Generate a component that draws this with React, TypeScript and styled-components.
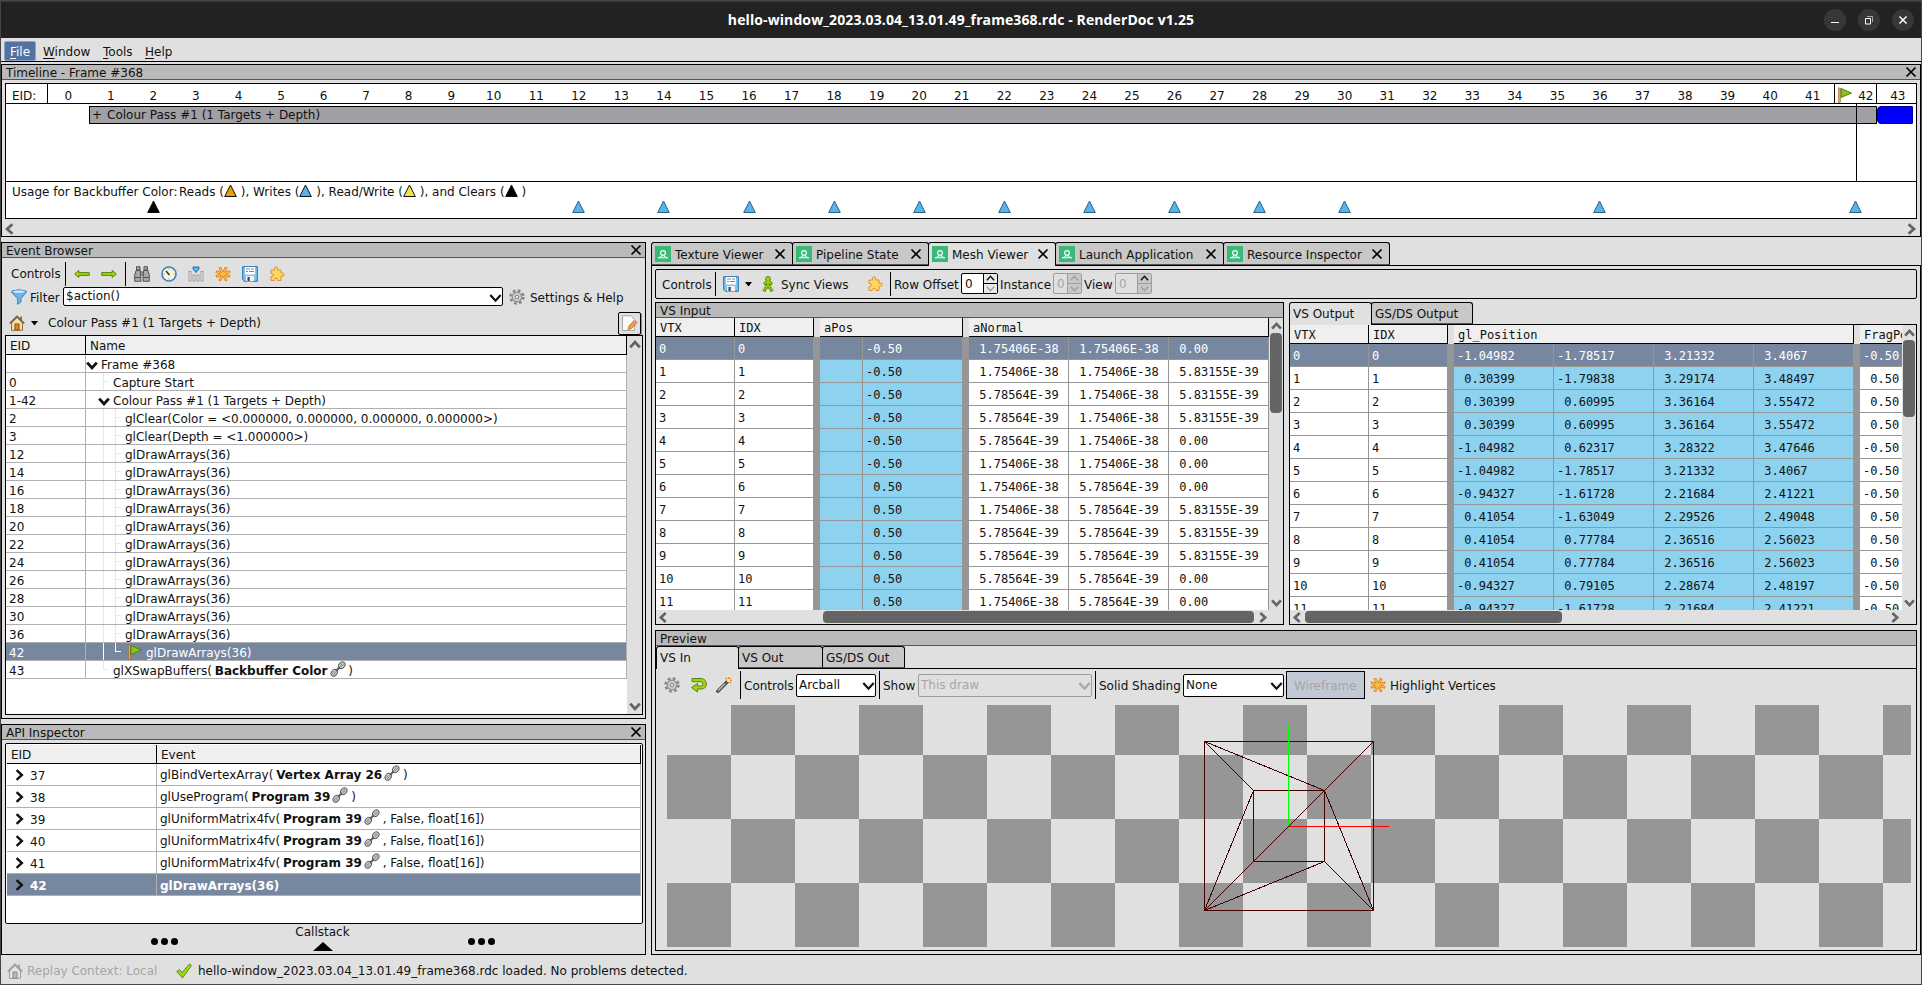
import React from "react";
import styled, { createGlobalStyle, css } from "styled-components";

const BG = "#e0e0e0";
const SELECTED = "#7887a0";
const SKY = "#8dd2ef";

const Global = createGlobalStyle`
  * { box-sizing: border-box; }
  body { margin: 0; background: ${BG}; overflow: hidden; }
`;

const Window = styled.div`
  width: 1922px;
  height: 985px;
  display: flex;
  flex-direction: column;
  background: ${BG};
  border: 1px solid #454545;
  font: 12px/14px "DejaVu Sans", sans-serif;
  color: #111;
  white-space: pre;
  overflow: hidden;
`;

const TitleBar = styled.header`
  flex: none;
  height: 37px;
  background: #222;
  border-top: 1px solid #3a3a3a;
  color: #fff;
  display: flex;
  align-items: center;
`;
const TitleText = styled.div`
  flex: 1;
  padding-left: 167px;
  text-align: center;
  font: bold 14px/20px "Open Sans", "Noto Sans", sans-serif;
  letter-spacing: 0.1px;
`;
const WindowButtons = styled.div`
  display: flex;
  gap: 12px;
  padding-right: 7px;
  width: 167px;
  justify-content: flex-end;
`;
const RoundButton = styled.div`
  width: 22px;
  height: 22px;
  border-radius: 50%;
  background: #373737;
  svg { display: block; }
`;

const MenuBar = styled.nav`
  flex: none;
  height: 24px;
  padding: 3px 0 0 3px;
  border-bottom: 1px solid #000;
  display: flex;
`;
const MenuItem = styled.span<{ $active?: boolean; $w: number }>`
  width: ${(p) => p.$w}px;
  height: 20px;
  padding: 4px 0 0 6px;
  border-radius: 2px;
  ${(p) => p.$active && css`background: #5371a3; color: #fff; border: 1px solid #8ba2c9; padding: 3px 0 0 5px;`}
  u { text-underline-offset: 2px; }
`;

const Dock = styled.section<{ $h: number }>`
  flex: none;
  height: ${(p) => p.$h}px;
  border: 1px solid #000;
  display: flex;
  flex-direction: column;
  overflow: hidden;
`;
const DockTitle = styled.div`
  flex: none;
  height: 15px;
  background: #bababa;
  border-bottom: 1px solid #555;
  padding: 0 3px 0 4px;
  display: flex;
  justify-content: space-between;
  line-height: 16px;
  svg { margin-top: 1px; }
`;

/* ---- timeline ---- */
const TimelineBox = styled.div`
  margin: 3px 3px 0;
  height: 136px;
  border: 1px solid #000;
  background: #fff;
  position: relative;
  overflow: hidden;
`;
const EidRow = styled.div`
  height: 20px;
  border-bottom: 1px solid #000;
  display: flex;
`;
const EidLabel = styled.div`
  flex: none;
  width: 42px;
  margin-right: -1px;
  border-right: 1px solid #000;
  padding: 5px 0 0 6px;
`;
const EidCell = styled.div<{ $current?: boolean }>`
  flex: none;
  width: 42.56px;
  padding-top: 5px;
  text-align: center;
  ${(p) => p.$current && css`
    border: solid #000; border-width: 0 1px;
    display: flex; justify-content: space-between;
    padding: 3px 2px 0 2px;
    span { padding-top: 2px; }
  `}
`;
const PassArea = styled.div`
  height: 78px;
  padding: 2px 0 0 83px;
  border-bottom: 1px solid #000;
  display: flex;
`;
const PassBar = styled.div`
  width: 1788px;
  height: 18px;
  background: #a09fa4;
  border: 1px solid #000;
  padding: 1px 0 0 2px;
  span { margin-left: 5px; }
`;
const SwapBar = styled.div`
  width: 36px;
  height: 18px;
  background: #00f;
  border: 1px solid #0000a8;
  border-radius: 4px 1px 1px 4px;
`;
const CurrentLine = styled.div`
  position: absolute;
  left: 1850px;
  top: 20px;
  width: 1px;
  height: 78px;
  background: #000;
`;
const UsageLine = styled.div`
  height: 18px;
  padding: 3px 0 0 6px;
  display: flex;
  svg { margin-top: -1px; }
`;
const UsageMarks = styled.div`
  display: flex;
  padding-left: 41px;
`;
const UsageCell = styled.div`
  flex: none;
  width: 42.56px;
  height: 14px;
  display: flex;
  justify-content: center;
`;
const ScrollStrip = styled.div`
  height: 17px;
  padding: 4px 3px 0 2px;
  display: flex;
  justify-content: space-between;
`;

/* ---- main split ---- */
const Main = styled.main`
  flex: none;
  height: 713px;
  margin-top: 5px;
  display: flex;
  gap: 5px;
`;
const LeftColumn = styled.div`
  width: 645px;
  display: flex;
  flex-direction: column;
  gap: 5px;
`;
const RightColumn = styled.div`
  width: 1270px;
  display: flex;
  flex-direction: column;
`;

const Bar = styled.div<{ $h: number; $pt?: number; $pb?: number; $pl?: number }>`
  flex: none;
  height: ${(p) => p.$h}px;
  padding: ${(p) => p.$pt || 0}px 0 ${(p) => p.$pb || 0}px ${(p) => p.$pl || 0}px;
  display: flex;
  align-items: center;
`;
const Slot = styled.div<{ $w: number; $dim?: boolean }>`
  flex: none;
  width: ${(p) => p.$w}px;
  display: flex;
  color: ${(p) => (p.$dim ? "#a6a6a6" : "inherit")};
`;
const Sep = styled.i<{ $h?: number }>`
  flex: none;
  width: 1px;
  height: ${(p) => p.$h || 24}px;
  background: #000;
`;
const Combo = styled.div<{ $w: number; $h: number; $disabled?: boolean }>`
  flex: none;
  width: ${(p) => p.$w}px;
  height: ${(p) => p.$h}px;
  border: 1px solid ${(p) => (p.$disabled ? "#9d9d9d" : "#000")};
  border-radius: 2px;
  background: ${(p) => (p.$disabled ? BG : "#fff")};
  color: ${(p) => (p.$disabled ? "#a6a6a6" : "#111")};
  padding: 0 0 1px 2px;
  display: flex;
  align-items: center;
  justify-content: space-between;
  svg { margin-top: 2px; }
`;
const EditButton = styled.div`
  width: 23px;
  height: 23px;
  border: 1px solid #000;
  border-radius: 2px;
  display: flex;
  align-items: center;
  justify-content: center;
  box-shadow: 1px 1px 0 #888;
`;

/* ---- event tree ---- */
const TreeBox = styled.div`
  margin-left: 3px;
  width: 638px;
  height: 380px;
  border: 1px solid #000;
  background: #fff;
  display: flex;
`;
const TreeRows = styled.div`
  width: 621px;
`;
const TreeHeader = styled.div<{ $first: number }>`
  height: 19px;
  background: #efefef;
  border: solid #000;
  border-width: 0 1px 1px 0;
  display: grid;
  grid-template-columns: ${(p) => p.$first}px 1fr;
  align-items: center;
  > * { padding-left: 4px; align-self: stretch; padding-top: 3px; }
  > *:first-child { border-right: 1px solid #000; }
`;
const TreeRow = styled.div<{ $selected?: boolean }>`
  height: 18px;
  display: grid;
  grid-template-columns: 80px 1fr;
  border: solid #b0b0b0;
  border-width: 0 1px 1px 0;
  background: ${(p) => (p.$selected ? SELECTED : "#fff")};
  color: ${(p) => (p.$selected ? "#fff" : "#111")};
  > :first-child { border-right: 1px solid #b0b0b0; padding: 3px 0 0 3px; }
`;
const NameCell = styled.div`
  display: flex;
  align-items: center;
  height: 17px;
  padding-top: 3px;
`;
const Guide = styled.i<{ $kind: "none" | "line" | "tee" | "end" | "blank"; $light?: boolean }>`
  flex: none;
  width: 12px;
  height: 17px;
  margin: -3px 0 0;
  background: ${(p) => {
    const c = p.$light ? "#fff" : "#e8e8e8";
    const full = `linear-gradient(${c},${c}) 5px 0/1px 100% no-repeat`;
    const half = `linear-gradient(${c},${c}) 5px 0/1px 50% no-repeat`;
    const arm = `linear-gradient(${c},${c}) 5px 50%/6px 1px no-repeat`;
    if (p.$kind === "line") return full;
    if (p.$kind === "tee") return `${full}, ${arm}`;
    if (p.$kind === "end") return `${half}, ${arm}`;
    return "none";
  }};
`;
const LinkIcon = styled.span`
  display: flex;
  flex: none;
  width: 18px;
  margin: -4px -1px 0 0;
  padding-left: 2px;
`;
const Resource = styled.b`
  margin-left: -1px;
`;
const VScroll = styled.div<{ $w: number }>`
  flex: none;
  width: ${(p) => p.$w}px;
  background: ${BG};
  display: flex;
  flex-direction: column;
  align-items: center;
  padding: 3px 0 2px;
  svg { flex: none; }
`;
const Thumb = styled.i<{ $w?: number; $h?: number; $m?: string }>`
  display: block;
  flex: none;
  width: ${(p) => p.$w || 12}px;
  height: ${(p) => p.$h || 12}px;
  margin: ${(p) => p.$m || 0};
  background: #646464;
  border-radius: 4px;
`;
const Spring = styled.i`
  flex: 1;
`;

/* ---- api inspector ---- */
const ApiBox = styled.div`
  margin: 3px 0 0 3px;
  width: 638px;
  height: 181px;
  border: 1px solid #000;
  border-radius: 2px;
  background: #fff;
  padding: 1px;
`;
const ApiRow = styled.div<{ $selected?: boolean }>`
  height: 22px;
  display: grid;
  grid-template-columns: 150px 1fr;
  border: solid #b0b0b0;
  border-width: 0 1px 1px 0;
  background: ${(p) => (p.$selected ? SELECTED : "#fff")};
  color: ${(p) => (p.$selected ? "#fff" : "#111")};
  font-weight: ${(p) => (p.$selected ? "bold" : "normal")};
  > div { display: flex; align-items: center; height: 21px; }
  > :first-child { border-right: 1px solid #b0b0b0; padding-left: 6px; gap: 5px; }
  > :last-child { padding-left: 3px; }
`;
const ApiEid = styled.span`
  padding-top: 2px;
`;
const Callstack = styled.div`
  flex: 1;
  display: grid;
  grid-template-columns: 151px 1fr 153px;
  padding-top: 1px;
`;
const Dots = styled.div<{ $right?: boolean }>`
  padding-top: 13px;
  display: flex;
  gap: 3.2px;
  justify-content: ${(p) => (p.$right ? "flex-start" : "flex-end")};
  margin: ${(p) => (p.$right ? "0 0 0 -24px" : "0 -25px 0 0")};
  i { width: 7px; height: 7px; border-radius: 50%; background: #000; }
`;
const CallstackTitle = styled.div`
  display: flex;
  flex-direction: column;
  align-items: center;
  gap: 3px;
`;

/* ---- mesh viewer ---- */
const TabStrip = styled.div<{ $h: number }>`
  flex: none;
  height: ${(p) => p.$h}px;
  display: flex;
`;
const Tab = styled.div<{ $w: number; $active?: boolean; $plain?: boolean }>`
  flex: none;
  width: ${(p) => p.$w}px;
  border: 1px solid #000;
  border-bottom: ${(p) => (p.$active ? "0" : "1px solid #555")};
  border-radius: 3px 3px 0 0;
  background: ${(p) => (p.$active ? BG : "#c8c8c8")};
  display: flex;
  align-items: center;
  padding: ${(p) => (p.$plain ? "0 3px" : "0 6px 0 3px")};
  & + & { margin-left: -1px; }
  ${(p) => p.$active && css`margin-bottom: -1px; padding-bottom: 2px; z-index: 1;`}
  > span { flex: 1; padding-top: 2px; margin-left: ${(p) => (p.$plain ? 0 : 4)}px; }
`;
const Frame = styled.div`
  height: 690px;
  border: 1px solid #000;
  padding: 3px;
`;
const MeshToolbar = styled.div`
  height: 30px;
  border: 1px solid #000;
  border-radius: 2px;
  padding: 0 0 0 6px;
  display: flex;
  align-items: center;
`;
const Label = styled.div<{ $w: number }>`
  flex: none;
  width: ${(p) => p.$w}px;
  padding-top: 2px;
`;
const Spin = styled.div<{ $w: number; $bw: number; $off?: boolean }>`
  flex: none;
  width: ${(p) => p.$w}px;
  height: 21px;
  margin-top: -1px;
  border: 1px solid ${(p) => (p.$off ? "#9d9d9d" : "#000")};
  border-radius: 2px;
  background: ${(p) => (p.$off ? BG : "#fff")};
  color: ${(p) => (p.$off ? "#a6a6a6" : "#111")};
  display: flex;
  > span { flex: 1; padding: 3px 0 0 3px; }
  > div {
    width: ${(p) => p.$bw}px;
    border-left: 1px solid ${(p) => (p.$off ? "#9d9d9d" : "#000")};
    background: ${(p) => (p.$off ? "#c8c8c8" : "#e8e8e8")};
    display: flex; flex-direction: column; align-items: center; justify-content: space-around;
    background-image: linear-gradient(${(p) => (p.$off ? "#9d9d9d, #9d9d9d" : "#000, #000")});
    background-size: 100% 1px; background-position: 0 9px; background-repeat: no-repeat;
  }
`;
const Split = styled.div`
  height: 323px;
  margin: 3px 0 5px;
  display: flex;
  gap: 5px;
`;
const Panel = styled.div<{ $w: number }>`
  width: ${(p) => p.$w}px;
  height: 323px;
  display: flex;
  flex-direction: column;
`;
const PanelBody = styled.div`
  flex: 1;
  min-height: 0;
  border: 1px solid #000;
  display: flex;
  flex-direction: column;
`;
const GridView = styled.div`
  flex: 1;
  min-height: 0;
  display: flex;
  font: 12px/14px "DejaVu Sans Mono", monospace;
`;
const GridRows = styled.div`
  flex: 1;
  min-width: 0;
  overflow: hidden;
`;
const GridHead = styled.div`
  display: flex;
  height: 19px;
  background: ${BG};
`;
const HeadCell = styled.div<{ $w: number; $gap?: boolean }>`
  flex: none;
  width: ${(p) => p.$w}px;
  background: #efefef;
  border: solid #000;
  border-width: 0 1px 1px 0;
  padding: 3px 0 0 4px;
  overflow: hidden;
  margin-right: ${(p) => (p.$gap ? 6 : 0)}px;
`;
const GridLine = styled.div<{ $selected?: boolean }>`
  display: flex;
  height: 23px;
  background: #969696;
  color: ${(p) => (p.$selected ? "#fff" : "#111")};
`;
const Cell = styled.div<{ $w: number; $fill?: string; $line?: boolean; $gap?: boolean }>`
  flex: none;
  width: ${(p) => p.$w}px;
  height: 22px;
  padding: 5px 0 0 3px;
  overflow: hidden;
  background: ${(p) => p.$fill || "#fff"};
  margin-right: ${(p) => (p.$gap ? 7 : p.$line ? 1 : 0)}px;
`;
const HScroll = styled.div<{ $pr: number }>`
  flex: none;
  height: 14px;
  padding: 0 ${(p) => p.$pr}px 0 2px;
  display: flex;
  align-items: center;
`;
const PreviewBody = styled.div`
  flex: 1;
  border-top: 1px solid #000;
`;
const WireButton = styled.div`
  width: 79px;
  height: 28px;
  border: 1px solid #000;
  background: #c3c9d4;
  color: #a6a6a6;
  padding: 7px 0 0 7px;
`;
const Viewport = styled.div`
  margin-left: 11px;
  width: 1244px;
  height: 242px;
  svg { display: block; }
`;

const StatusBar = styled.footer`
  flex: 1;
  display: flex;
  align-items: center;
  padding: 3px 0 0 6px;
`;

/* ---- icons ---- */
type ChevronProps = { d: "up" | "down" | "left" | "right"; s?: number; c?: string; w?: number };
const Chevron = ({ d, s = 10, c = "#111", w = 2.4 }: ChevronProps) => {
  const r = { down: 0, left: 90, up: 180, right: 270 }[d];
  return (
    <svg width={s} height={s} viewBox="0 0 10 10">
      <path d="M1 3 L5 7.4 L9 3" fill="none" stroke={c} strokeWidth={w} transform={`rotate(${r} 5 5)`} />
    </svg>
  );
};
const Cross = ({ s = 12 }: { s?: number }) => (
  <svg width={s} height={s} viewBox="0 0 12 12">
    <path d="M1.5 1.5 L10.5 10.5 M10.5 1.5 L1.5 10.5" stroke="#000" strokeWidth="1.7" />
  </svg>
);
const Tri = ({ fill, stroke = "#111" }: { fill: string; stroke?: string }) => (
  <svg width="13" height="13" viewBox="0 0 13 13">
    <path d="M6.5 1 L12.3 12.5 H0.7 Z" fill={fill} stroke={stroke} strokeWidth="1" />
  </svg>
);
const Caret = () => (
  <svg width="7" height="5" viewBox="0 0 7 5"><path d="M0 0 H7 L3.5 4.5 Z" fill="#000" /></svg>
);
const Flag = () => (
  <svg width="16" height="16" viewBox="0 0 16 16">
    <rect x="1.5" y="1" width="1.8" height="14.5" fill="#d9a866" stroke="#9a6a35" strokeWidth=".6" />
    <path d="M4 1.5 L14.5 6 L4 10.5 Z" fill="#8cc21a" stroke="#4f8410" />
  </svg>
);
const Arrow = ({ flip }: { flip?: boolean }) => (
  <svg width="16" height="16" viewBox="0 0 16 16">
    <path transform={flip ? "rotate(180 8 8)" : undefined} d="M.7 8 L4.8 4.4 V6.6 H15.3 V9.4 H4.8 V11.6 Z" fill="#a4d600" stroke="#568413" />
  </svg>
);
const Binoculars = () => (
  <svg width="16" height="16" viewBox="0 0 16 16">
    <g fill="#a8a8a8" stroke="#555">
      <path d="M2.5 .7 H6 V4 H2.5 Z M10 .7 H13.500 V4 H10 Z" />
      <path d="M2 4.500 H6.500 V8 L7 15.300 H.7 V9 Z M9.500 4.500 H14 L15.300 9 V15.300 H9 V8 Z" />
      <path d="M6.500 6 H9.500 V9 H6.500 Z M1 11.500 H7 M9 11.500 H15" />
    </g>
  </svg>
);
const Clock = () => (
  <svg width="16" height="16" viewBox="0 0 16 16">
    <circle cx="8" cy="8" r="7" fill="#fdf6d8" stroke="#3a80c4" strokeWidth="1.6" />
    <path d="M5 5 L8.500 9" stroke="#222" strokeWidth="1.300" />
    <path d="M8 2.500 V3.500 M8 12.500 V13.500 M2.500 8 H3.500 M12.500 8 H13.500 M11.500 4.500 L12 4" stroke="#888" />
  </svg>
);
const Chart = () => (
  <svg width="16" height="16" viewBox="0 0 16 16">
    <g fill="#f2f2f2" stroke="#9a9a9a" strokeWidth=".9">
      <rect x="1" y="5.500" width="2" height="9.500" /><rect x="5" y="9" width="2" height="6" />
      <rect x="9" y="9" width="2" height="6" /><rect x="13" y="5.500" width="2" height="9.500" />
    </g>
    <path d="M5 1 H11 V3 L8 6.500 L5 3 Z" fill="#5db4ee" stroke="#1c62a8" strokeWidth=".9" />
  </svg>
);
const Asterisk = () => (
  <svg width="16" height="16" viewBox="0 0 16 16">
    <g strokeLinecap="square">
      <path d="M5.300 2.500 L10.700 13.500 M10.700 2.500 L5.300 13.500 M2.200 6 L13.800 10 M2.200 10 L13.800 6" stroke="#dd7d10" strokeWidth="2.800" />
      <path d="M5.300 2.500 L10.700 13.500 M10.700 2.500 L5.300 13.500 M2.200 6 L13.800 10 M2.200 10 L13.800 6" stroke="#ffbe52" strokeWidth="1.300" />
    </g>
  </svg>
);
const Disk = () => (
  <svg width="16" height="16" viewBox="0 0 16 16">
    <path d="M.7 .7 H15.300 V15.300 H2.500 L.7 13.500 Z" fill="#7cc6f0" stroke="#1d6fae" />
    <rect x="3" y="1" width="10" height="7.500" fill="#fff" />
    <path d="M4 3 H8 M9 3 H12 M4 5.500 H6 M7 5.500 H12" stroke="#888" />
    <rect x="4" y="10" width="8" height="5.300" fill="#eef2f5" />
    <rect x="5.500" y="11" width="2.200" height="4" fill="#444" />
  </svg>
);
const Puzzle = () => (
  <svg width="16" height="16" viewBox="0 0 16 16">
    <path d="M2 4 H5.500 V2.500 Q5.500 .8 7 .8 Q8.600 .8 8.600 2.500 V4 H12 V7 H13.600 Q15.300 7 15.300 8.600 Q15.300 10.200 13.600 10.200 H12 V14.500 H8.700 V13.500 Q8.500 12.300 7 12.300 Q5.600 12.300 5.400 13.500 V14.500 H2 V10.500 H3 Q4.300 10.200 4.300 8.900 Q4.300 7.600 3 7.500 H2 Z" fill="#ffd65e" stroke="#dd9138" />
  </svg>
);
const Funnel = () => (
  <svg width="16" height="16" viewBox="0 0 16 16">
    <path d="M.8 2 Q8 -.3 15.200 2 V3.500 L10 9.500 V13 L6.500 15.300 V9.500 L.8 3.500 Z" fill="#6db4ea" stroke="#3f82bd" />
    <ellipse cx="8" cy="2.600" rx="6" ry="1.200" fill="#d9eefb" />
  </svg>
);
const Gear = () => (
  <svg width="16" height="16" viewBox="0 0 16 16">
    <circle cx="8" cy="8" r="6.500" fill="none" stroke="#858585" strokeWidth="2.400" strokeDasharray="2.700 2.400" />
    <circle cx="8" cy="8" r="4.800" fill="#cfcfcf" stroke="#8b8b8b" strokeWidth="1.200" />
    <circle cx="8" cy="8" r="1.800" fill="#eee" stroke="#7d7d7d" />
  </svg>
);
const Home = ({ gray }: { gray?: boolean }) => (
  <svg width="16" height="16" viewBox="0 0 16 16">
    <path d="M2.500 8 V15.300 H13.500 V8 L8 2.500 Z" fill={gray ? "#e4e4e4" : "#f6dfa8"} stroke={gray ? "#999" : "#9a6a35"} />
    <path d="M.7 8.500 L8 1.300 L15.300 8.500 M12 1.500 V5" fill="none" stroke={gray ? "#999" : "#6e5a48"} strokeWidth="1.600" />
    <rect x="6" y="9" width="4" height="6" fill={gray ? "#bbb" : "#d08a28"} stroke={gray ? "#888" : "#80501c"} />
  </svg>
);
const EditPage = () => (
  <svg width="17" height="17" viewBox="0 0 17 17">
    <path d="M1.500 .7 H10 L13.500 4.500 V15.500 H1.500 Z" fill="#fafafa" stroke="#aaa" />
    <path d="M7 14.500 L8 11 L13.500 5 L16 7.500 L10.500 13.500 Z" fill="#f6a02c" stroke="#b8651a" strokeWidth=".8" />
    <path d="M13.500 5 L16 7.500 L14.800 8.700 L12.400 6.200 Z" fill="#d78bb5" />
  </svg>
);
const Chain = () => (
  <svg width="16" height="16" viewBox="0 0 16 16">
    <g fill="#d8d8d8" stroke="#5c5c5c">
      <ellipse rx="3.600" ry="2.800" transform="translate(4.200 11.800) rotate(-50)" />
      <ellipse rx="3.600" ry="2.800" transform="translate(11.800 4.200) rotate(-50)" />
      <ellipse rx="1.500" ry=".9" strokeWidth=".8" fill="#fff" transform="translate(4 12) rotate(-50)" />
      <ellipse rx="1.500" ry=".9" strokeWidth=".8" fill="#fff" transform="translate(12 4) rotate(-50)" />
      <path d="M6 10 L10 6" strokeWidth="2" />
    </g>
  </svg>
);
const Check = () => (
  <svg width="16" height="16" viewBox="0 0 16 16">
    <path d="M.8 8.500 L3.500 6.500 L6 9.500 L13.500 1 L15.500 2.500 L6.500 15 Z" fill="#99dd10" stroke="#4f8410" strokeWidth=".9" />
  </svg>
);
const Person = () => (
  <svg width="14" height="16" viewBox="1 0 14 16">
    <path d="M8 5 V9 L3.700 15.300 M8 9 L12.300 15.300 M4 8.500 L8 5 L12 8.500" fill="none" stroke="#4f8410" strokeWidth="3.200" />
    <circle cx="8" cy="2.900" r="2.400" fill="#a4d600" stroke="#4f8410" />
    <path d="M8 4 V9 L4 14.800 M8 9 L12 14.800 M4.400 8.100 L8 5 L11.600 8.100" fill="none" stroke="#a4d600" strokeWidth="1.500" />
  </svg>
);
const Loop = () => (
  <svg width="18" height="16" viewBox="0 0 18 16">
    <path d="M2 1.500 H11 Q16.300 2 16.300 7 Q16.300 11.700 11 12 H7.500 V15 L1.500 10.500 L7.500 6.500 V9 H11 Q13 8.800 13 7 Q13 5 11 4.700 H2 Z" fill="#a4d600" stroke="#568413" />
  </svg>
);
const Wand = () => (
  <svg width="16" height="16" viewBox="0 0 16 16">
    <path d="M1.800 14.200 L11.500 4.500" stroke="#555" strokeWidth="3.600" strokeLinecap="round" />
    <path d="M2 13.600 L9 6.600" stroke="#c9c9c9" strokeWidth="1.300" />
    <circle cx="12.500" cy="3.500" r="1.700" fill="#fff1b0" />
    <path d="M12.500 0 V2 M15.800 3.500 H14 M9.500 1 L10.800 2.200 M15 .8 L13.700 2.300 M15 6.200 L13.800 5" stroke="#f08020" strokeWidth="1.200" />
  </svg>
);
const TabIcon = () => (
  <svg width="16" height="16" viewBox="0 0 16 16">
    <rect width="16" height="16" fill="#3bb778" />
    <circle cx="8" cy="7" r="2.400" fill="none" stroke="#e9fff3" strokeWidth="1.300" />
    <path d="M7 9 V10.500 L3 11.800 H13 L9 10.500 V9" fill="none" stroke="#e9fff3" strokeWidth="1" />
  </svg>
);

/* ---- data ---- */
const EIDS = Array.from({ length: 44 }, (_, i) => i);
const WRITES = [12, 14, 16, 18, 20, 22, 24, 26, 28, 30, 36, 42];
const DRAWS = ["12", "14", "16", "18", "20", "22", "24", "26", "28", "30", "36"];

const A = "1.75406E-38";
const B = "5.78564E-39";
const C = "5.83155E-39";
const Z = "0.00";
const INPUT: string[][] = [
  ["-0.50", A, A, Z], ["-0.50", A, A, C], ["-0.50", B, A, C], ["-0.50", B, A, C],
  ["-0.50", B, A, Z], ["-0.50", A, A, Z], [" 0.50", A, B, Z], [" 0.50", A, B, C],
  [" 0.50", B, B, C], [" 0.50", B, B, C], [" 0.50", B, B, Z], [" 0.50", A, B, Z],
];
const OUTPUT: string[][] = [
  ["-1.04982", "-1.78517", "3.21332", "3.4067", "-0.50"],
  [" 0.30399", "-1.79838", "3.29174", "3.48497", " 0.50"],
  [" 0.30399", " 0.60995", "3.36164", "3.55472", " 0.50"],
  [" 0.30399", " 0.60995", "3.36164", "3.55472", " 0.50"],
  ["-1.04982", " 0.62317", "3.28322", "3.47646", "-0.50"],
  ["-1.04982", "-1.78517", "3.21332", "3.4067", "-0.50"],
  ["-0.94327", "-1.61728", "2.21684", "2.41221", "-0.50"],
  [" 0.41054", "-1.63049", "2.29526", "2.49048", " 0.50"],
  [" 0.41054", " 0.77784", "2.36516", "2.56023", " 0.50"],
  [" 0.41054", " 0.77784", "2.36516", "2.56023", " 0.50"],
  ["-0.94327", " 0.79105", "2.28674", "2.48197", "-0.50"],
  ["-0.94327", "-1.61728", "2.21684", "2.41221", "-0.50"],
];
const API: [string, string, string, string][] = [
  ["37", "glBindVertexArray( ", "Vertex Array 26", " )"],
  ["38", "glUseProgram( ", "Program 39", " )"],
  ["39", "glUniformMatrix4fv( ", "Program 39", " , False, float[16])"],
  ["40", "glUniformMatrix4fv( ", "Program 39", " , False, float[16])"],
  ["41", "glUniformMatrix4fv( ", "Program 39", " , False, float[16])"],
];

const Timeline = () => (
  <Dock $h={173}>
    <DockTitle><span>Timeline - Frame #368</span><Cross /></DockTitle>
    <TimelineBox>
      <EidRow>
        <EidLabel>EID:</EidLabel>
        {EIDS.map((n) => (
          <EidCell key={n} $current={n === 42}>{n === 42 ? <><Flag /><span>42</span></> : n}</EidCell>
        ))}
      </EidRow>
      <PassArea>
        <PassBar>+<span>Colour Pass #1 (1 Targets + Depth)</span></PassBar>
        <SwapBar />
      </PassArea>
      <UsageLine>
        <Slot $w={167}>Usage for Backbuffer Color:</Slot>
        <span>Reads (</span><Tri fill="#e69f00" /><span> ), Writes (</span><Tri fill="#56b4e9" />
        <span> ), Read/Write (</span><Tri fill="#f0e442" /><span> ), and Clears (</span><Tri fill="#000" /><span> )</span>
      </UsageLine>
      <UsageMarks>
        {EIDS.map((n) => (
          <UsageCell key={n}>
            {n === 2 && <Tri fill="#000" />}
            {WRITES.includes(n) && <Tri fill="#56b4e9" stroke="#2e6384" />}
          </UsageCell>
        ))}
      </UsageMarks>
      <CurrentLine />
    </TimelineBox>
    <ScrollStrip><Chevron d="left" s={12} c="#646464" /><Chevron d="right" s={12} c="#646464" /></ScrollStrip>
  </Dock>
);

const EventBrowser = () => (
  <Dock $h={477}>
    <DockTitle><span>Event Browser</span><Cross /></DockTitle>
    <Bar $h={28} $pt={3} $pl={9}>
      <Slot $w={54}>Controls</Slot><Sep />
      <Slot $w={8} />
      <Slot $w={27}><Arrow /></Slot><Slot $w={24}><Arrow flip /></Slot><Sep />
      <Slot $w={8} />
      <Slot $w={26.5}><Binoculars /></Slot><Slot $w={27}><Clock /></Slot><Slot $w={27}><Chart /></Slot>
      <Slot $w={27}><Asterisk /></Slot><Slot $w={27}><Disk /></Slot><Puzzle />
    </Bar>
    <Bar $h={21} $pl={9}>
      <Slot $w={19}><Funnel /></Slot><Label $w={33}>Filter</Label>
      <Combo $w={440} $h={19}>$action()<Chevron d="down" s={13} w={1.7} /></Combo>
      <Slot $w={6} /><Slot $w={21}><Gear /></Slot><Label $w={94}>Settings &amp; Help</Label>
    </Bar>
    <Bar $h={28} $pt={4} $pl={7}>
      <Slot $w={22}><Home /></Slot><Slot $w={17}><Caret /></Slot>
      <Slot $w={570}>Colour Pass #1 (1 Targets + Depth)</Slot>
      <EditButton><EditPage /></EditButton>
    </Bar>
    <TreeBox>
      <TreeRows>
        <TreeHeader $first={80}><span>EID</span><span>Name</span></TreeHeader>
        <TreeRow><span /><NameCell><Slot $w={15}><Chevron d="down" s={12} /></Slot>Frame #368</NameCell></TreeRow>
        <TreeRow><span>0</span><NameCell><Guide $kind="blank" /><Guide $kind="tee" /><Slot $w={3} />Capture Start</NameCell></TreeRow>
        <TreeRow><span>1-42</span><NameCell><Guide $kind="blank" /><Slot $w={15}><Chevron d="down" s={12} /></Slot>Colour Pass #1 (1 Targets + Depth)</NameCell></TreeRow>
        <TreeRow><span>2</span><NameCell><Guide $kind="blank" /><Guide $kind="line" /><Guide $kind="tee" /><Slot $w={3} />{"glClear(Color = <0.000000, 0.000000, 0.000000, 0.000000>)"}</NameCell></TreeRow>
        <TreeRow><span>3</span><NameCell><Guide $kind="blank" /><Guide $kind="line" /><Guide $kind="tee" /><Slot $w={3} />{"glClear(Depth = <1.000000>)"}</NameCell></TreeRow>
        {DRAWS.map((d) => (
          <TreeRow key={d}><span>{d}</span><NameCell><Guide $kind="blank" /><Guide $kind="line" /><Guide $kind="tee" /><Slot $w={3} />glDrawArrays(36)</NameCell></TreeRow>
        ))}
        <TreeRow $selected><span>42</span><NameCell><Guide $kind="blank" /><Guide $kind="line" $light /><Guide $kind="end" $light /><Slot $w={3} /><LinkIcon as={FlagSlot}><Flag /></LinkIcon>glDrawArrays(36)</NameCell></TreeRow>
        <TreeRow><span>43</span><NameCell><Guide $kind="blank" /><Guide $kind="end" /><Slot $w={3} />glXSwapBuffers( <Resource>Backbuffer Color</Resource><LinkIcon><Chain /></LinkIcon> )</NameCell></TreeRow>
      </TreeRows>
      <VScroll $w={15}><Chevron d="up" s={12} c="#646464" /><Spring /><Chevron d="down" s={12} c="#646464" /></VScroll>
    </TreeBox>
  </Dock>
);

const FlagSlot = styled.span`
  display: flex;
  flex: none;
  width: 22px;
  margin-top: -3px;
`;

const ApiInspector = () => (
  <Dock $h={231}>
    <DockTitle><span>API Inspector</span><Cross /></DockTitle>
    <ApiBox>
      <TreeHeader $first={150}><span>EID</span><span>Event</span></TreeHeader>
      {API.map(([eid, fn, res, rest]) => (
        <ApiRow key={eid}>
          <div><Chevron d="right" s={12} w={2} /><ApiEid>{eid}</ApiEid></div>
          <div>{fn}<Resource>{res}</Resource><LinkIcon><Chain /></LinkIcon>{rest}</div>
        </ApiRow>
      ))}
      <ApiRow $selected><div><Chevron d="right" s={12} w={2} /><ApiEid>42</ApiEid></div><div><ApiEid>glDrawArrays(36)</ApiEid></div></ApiRow>
    </ApiBox>
    <Callstack>
      <Dots><i /><i /><i /></Dots>
      <CallstackTitle>
        Callstack
        <svg width="20" height="9" viewBox="0 0 20 9"><path d="M10 0 L20 9 H0 Z" fill="#000" /></svg>
      </CallstackTitle>
      <Dots $right><i /><i /><i /></Dots>
    </Callstack>
  </Dock>
);

const VsInput = () => (
  <Panel $w={629}>
    <PanelBody>
      <DockTitle><span>VS Input</span></DockTitle>
      <GridView>
        <GridRows>
          <GridHead>
            <HeadCell $w={79}>VTX</HeadCell><HeadCell $w={79} $gap>IDX</HeadCell>
            <HeadCell $w={143} $gap>aPos</HeadCell><HeadCell $w={300}>aNormal</HeadCell>
          </GridHead>
          {INPUT.map((r, i) => {
            const f = i === 0 ? SELECTED : undefined;
            return (
              <GridLine key={i} $selected={i === 0}>
                <Cell $w={78} $fill={f} $line>{i}</Cell>
                <Cell $w={78} $fill={f} $gap>{i}</Cell>
                <Cell $w={42} $fill={f || SKY} $line />
                <Cell $w={99} $fill={f || SKY} $gap>{r[0]}</Cell>
                <Cell $w={99} $fill={f} $line> {r[1]}</Cell>
                <Cell $w={99} $fill={f} $line> {r[2]}</Cell>
                <Cell $w={99} $fill={f}> {r[3]}</Cell>
              </GridLine>
            );
          })}
        </GridRows>
        <VScroll $w={14}>
          <Chevron d="up" s={11} c="#646464" /><Thumb $h={80} $m="1px 0 0" /><Spring /><Chevron d="down" s={11} c="#646464" />
        </VScroll>
      </GridView>
      <HScroll $pr={15}>
        <Chevron d="left" s={11} c="#646464" /><Thumb $w={431} $m="0 0 0 154px" /><Spring /><Chevron d="right" s={11} c="#646464" />
      </HScroll>
    </PanelBody>
  </Panel>
);

const VsOutput = () => (
  <Panel $w={628}>
    <TabStrip $h={22}>
      <Tab $w={83} $active $plain><span>VS Output</span></Tab>
      <Tab $w={102} $plain><span>GS/DS Output</span></Tab>
    </TabStrip>
    <PanelBody>
      <GridView>
        <GridRows>
          <GridHead>
            <HeadCell $w={79}>VTX</HeadCell><HeadCell $w={79} $gap>IDX</HeadCell>
            <HeadCell $w={400} $gap>gl_Position</HeadCell><HeadCell $w={60}>FragPos</HeadCell>
          </GridHead>
          {OUTPUT.map((r, i) => {
            const f = i === 0 ? SELECTED : undefined;
            return (
              <GridLine key={i} $selected={i === 0}>
                <Cell $w={78} $fill={f} $line>{i}</Cell>
                <Cell $w={78} $fill={f} $gap>{i}</Cell>
                <Cell $w={99} $fill={f || SKY} $line>{r[0]}</Cell>
                <Cell $w={99} $fill={f || SKY} $line>{r[1]}</Cell>
                <Cell $w={99} $fill={f || SKY} $line> {r[2]}</Cell>
                <Cell $w={99} $fill={f || SKY} $gap> {r[3]}</Cell>
                <Cell $w={60} $fill={f}>{r[4]}</Cell>
              </GridLine>
            );
          })}
        </GridRows>
        <VScroll $w={14}>
          <Chevron d="up" s={11} c="#646464" /><Thumb $h={77} $m="1px 0 0" /><Spring /><Chevron d="down" s={11} c="#646464" />
        </VScroll>
      </GridView>
      <HScroll $pr={16}>
        <Chevron d="left" s={11} c="#646464" /><Thumb $w={257} $m="0 0 0 2px" /><Spring /><Chevron d="right" s={11} c="#646464" />
      </HScroll>
    </PanelBody>
  </Panel>
);

const Scene = () => {
  const squares: React.ReactNode[] = [];
  for (let r = 0; r < 4; r++)
    for (let c = 0; c < 20; c++)
      if ((r + c) % 2 === 1) squares.push(<rect key={`${r}-${c}`} x={c * 64} y={r * 64 - 14} width="64" height="64" fill="#969696" />);
  return (
    <svg width="1244" height="242" viewBox="0 0 1244 242" shapeRendering="crispEdges">
      {squares}
      <g fill="none" stroke="#450000">
        <rect x="537.5" y="36.5" width="169" height="169" />
        <rect x="586.5" y="85.5" width="71" height="71" />
        <path d="M537.5 36.5 L586.5 85.5 M537.5 36.5 L657.5 85.500 M706.5 36.5 L537.5 205.5 M586.5 85.5 L537.5 205.5 M537.5 205.5 L657.5 156.5 M657.5 85.5 L706.5 205.5 M657.5 156.5 L706.5 205.5" />
      </g>
      <path d="M621.5 21 V121" stroke="#00ff00" />
      <path d="M622 121.5 H722" stroke="#ff0000" />
    </svg>
  );
};

const PreviewPanel = () => (
  <Dock $h={321}>
    <DockTitle><span>Preview</span></DockTitle>
    <TabStrip $h={22}>
      <Tab $w={83} $active $plain><span>VS In</span></Tab>
      <Tab $w={85} $plain><span>VS Out</span></Tab>
      <Tab $w={83} $plain><span>GS/DS Out</span></Tab>
    </TabStrip>
    <PreviewBody>
      <Bar $h={36} $pl={8} $pb={4}>
        <Slot $w={26}><Gear /></Slot><Slot $w={26}><Loop /></Slot><Slot $w={24}><Wand /></Slot><Sep $h={28} />
        <Slot $w={3} /><Label $w={52}>Controls</Label>
        <Combo $w={80} $h={23}>Arcball<Chevron d="down" s={13} w={1.7} /></Combo>
        <Slot $w={3} /><Sep $h={28} /><Slot $w={3} /><Label $w={35}>Show</Label>
        <Combo $w={174} $h={23} $disabled>This draw<Chevron d="down" s={13} w={1.7} c="#a6a6a6" /></Combo>
        <Slot $w={3} /><Sep $h={28} /><Slot $w={3} /><Label $w={84}>Solid Shading</Label>
        <Combo $w={101} $h={23}>None<Chevron d="down" s={13} w={1.7} /></Combo>
        <Slot $w={2} /><WireButton>Wireframe</WireButton>
        <Slot $w={5} /><Slot $w={20}><Asterisk /></Slot><Label $w={110}>Highlight Vertices</Label>
      </Bar>
      <Viewport><Scene /></Viewport>
    </PreviewBody>
  </Dock>
);

export default function App() {
  return (
    <Window>
      <Global />
      <TitleBar>
        <TitleText>hello-window_2023.03.04_13.01.49_frame368.rdc - RenderDoc v1.25</TitleText>
        <WindowButtons>
          <RoundButton><svg width="22" height="22"><path d="M7 13.500 H15" stroke="#fff" /></svg></RoundButton>
          <RoundButton><svg width="22" height="22"><path d="M7.500 9.500 H12.500 V15 H7.500 Z" fill="none" stroke="#fff" /><path d="M9 7.500 H14.500 V13" fill="none" stroke="#aaa" /></svg></RoundButton>
          <RoundButton><svg width="22" height="22"><path d="M7.500 7.500 L14.500 14.500 M14.500 7.500 L7.500 14.500" stroke="#fff" strokeWidth="1.500" /></svg></RoundButton>
        </WindowButtons>
      </TitleBar>
      <MenuBar>
        <MenuItem $w={32} $active><u>F</u>ile</MenuItem>
        <Slot $w={1} />
        <MenuItem $w={60}><u>W</u>indow</MenuItem>
        <MenuItem $w={42}><u>T</u>ools</MenuItem>
        <MenuItem $w={42}><u>H</u>elp</MenuItem>
      </MenuBar>
      <Bar $h={2} />
      <Timeline />
      <Main>
        <LeftColumn><EventBrowser /><ApiInspector /></LeftColumn>
        <RightColumn>
          <TabStrip $h={23}>
            <Tab $w={142}><TabIcon /><span>Texture Viewer</span><Cross /></Tab>
            <Tab $w={137}><TabIcon /><span>Pipeline State</span><Cross /></Tab>
            <Tab $w={128} $active><TabIcon /><span>Mesh Viewer</span><Cross /></Tab>
            <Tab $w={169}><TabIcon /><span>Launch Application</span><Cross /></Tab>
            <Tab $w={167}><TabIcon /><span>Resource Inspector</span><Cross /></Tab>
          </TabStrip>
          <Frame>
            <MeshToolbar>
              <Label $w={53}>Controls</Label><Sep /><Slot $w={7} />
              <Slot $w={22}><Disk /></Slot><Slot $w={16}><Caret /></Slot>
              <Slot $w={20}><Person /></Slot><Label $w={86}>Sync Views</Label>
              <Slot $w={23}><Puzzle /></Slot><Sep />
              <Slot $w={3} /><Label $w={67}>Row Offset</Label>
              <Spin $w={37} $bw={14}><span>0</span><div><Chevron d="up" s={9} w={1.6} /><Chevron d="down" s={9} w={1.6} c="#a0a0a0" /></div></Spin>
              <Slot $w={2} /><Label $w={53}>Instance</Label>
              <Spin $w={29} $bw={14} $off><span>0</span><div><Chevron d="up" s={9} w={1.6} c="#a0a0a0" /><Chevron d="down" s={9} w={1.6} c="#a0a0a0" /></div></Spin>
              <Slot $w={2} /><Label $w={31}>View</Label>
              <Spin $w={37} $bw={14} $off><span>0</span><div><Chevron d="up" s={9} w={1.6} /><Chevron d="down" s={9} w={1.6} c="#a0a0a0" /></div></Spin>
            </MeshToolbar>
            <Split><VsInput /><VsOutput /></Split>
            <PreviewPanel />
          </Frame>
        </RightColumn>
      </Main>
      <StatusBar>
        <Slot $w={20}><Home gray /></Slot><Slot $w={149} $dim>Replay Context: Local</Slot>
        <Slot $w={22}><Check /></Slot>
        <span>hello-window_2023.03.04_13.01.49_frame368.rdc loaded. No problems detected.</span>
      </StatusBar>
    </Window>
  );
}
